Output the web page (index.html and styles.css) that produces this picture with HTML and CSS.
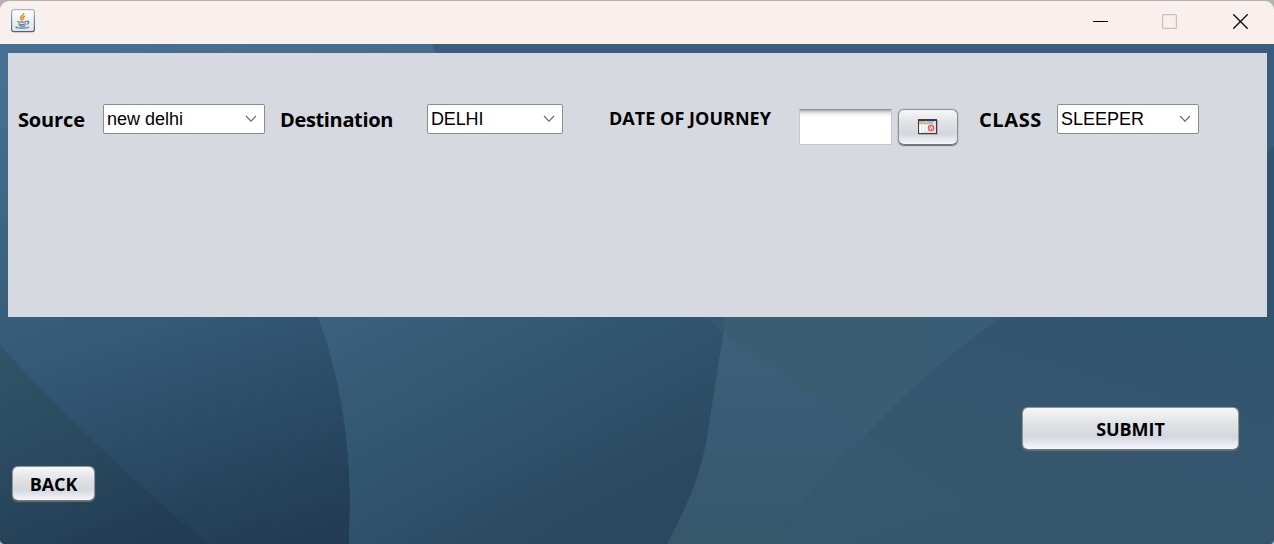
FILE: index.html
```
<!DOCTYPE html>
<html lang="en">
<head>
<meta charset="utf-8">
<title>Journey search</title>
<link rel="stylesheet" href="styles.css">
</head>
<body>
<div class="window">
  <header class="titlebar">
    <svg class="app-icon" width="24" height="24" viewBox="0 0 24 24">
      <defs><linearGradient id="tile" x1="0" y1="0" x2="0" y2="1"><stop offset="0" stop-color="#fff"/><stop offset="1" stop-color="#dfe3e6"/></linearGradient>
      <linearGradient id="edge" x1="0" y1="0" x2="0" y2="1"><stop offset="0" stop-color="#a5b7c4"/><stop offset="1" stop-color="#48657c"/></linearGradient></defs>
      <rect x=".6" y=".6" width="22.8" height="22" rx="2" fill="url(#tile)" stroke="url(#edge)" stroke-width="1.2"/>
      <path d="M12.6 4.3c.6 2-2.900 2.600-2.900 4.800 0 1 .9 1.500 1.600 2.700M14.200 7.300c-2.400.9-2.800 1.800-1.500 3.300" fill="none" stroke="#ee8a34" stroke-width="1.700"/>
      <path d="M6.200 12.500c2 .8 7.500.8 9.800 0M7 14.800c2.500.8 6 .8 8 0M16 12.300c2.600-.6 2.300 2.300-.3 3M8 16.700c2 .5 5 .5 6.400 0M5.600 17.600c-2 .9 2.400 1.700 6 1.500 2.500 0 5.600-.3 6.200-1.300" fill="none" stroke="#557792" stroke-width="1.200"/>
    </svg>
    <div class="controls">
      <svg width="15" height="15" viewBox="0 0 15 15"><path d="M0 7.500h15" stroke="#000"/></svg>
      <svg width="15" height="15" viewBox="0 0 15 15"><rect x=".6" y=".6" width="13.800" height="13.800" rx="1" fill="none" stroke="#c5bebc" stroke-width="1.200"/></svg>
      <svg width="15" height="15" viewBox="0 0 15 15"><path d="M.3.3l14.400 14.400M14.700.3L.3 14.700" stroke="#111" stroke-width="1.400"/></svg>
    </div>
  </header>
  <main class="content">
    <svg class="backdrop" width="1274" height="500" viewBox="0 44 1274 500">
      <defs>
        <linearGradient id="left" gradientUnits="userSpaceOnUse" x1="80" y1="60" x2="235" y2="555"><stop offset="0" stop-color="#467091"/><stop offset=".55" stop-color="#345875"/><stop offset="1" stop-color="#223c53"/></linearGradient>
        <linearGradient id="corner" gradientUnits="userSpaceOnUse" x1="0" y1="345" x2="90" y2="560"><stop offset="0" stop-color="#325468"/><stop offset=".55" stop-color="#2a495e"/><stop offset="1" stop-color="#223c53"/></linearGradient>
        <linearGradient id="middle" gradientUnits="userSpaceOnUse" x1="390" y1="290" x2="530" y2="560"><stop offset="0" stop-color="#3b607b"/><stop offset=".5" stop-color="#32556f"/><stop offset="1" stop-color="#2b485f"/></linearGradient>
        <linearGradient id="right" gradientUnits="userSpaceOnUse" x1="800" y1="320" x2="800" y2="544"><stop offset="0" stop-color="#3d6079"/><stop offset=".4" stop-color="#3b5c76"/><stop offset="1" stop-color="#37576b"/></linearGradient>
        <linearGradient id="far" gradientUnits="userSpaceOnUse" x1="1130" y1="300" x2="1060" y2="544"><stop offset="0" stop-color="#31546f"/><stop offset=".5" stop-color="#35566e"/><stop offset="1" stop-color="#36566b"/></linearGradient>
        <linearGradient id="band" gradientUnits="userSpaceOnUse" x1="720" y1="317" x2="980" y2="317"><stop offset="0" stop-color="#3a5d73"/><stop offset=".55" stop-color="#3a5d71"/><stop offset="1" stop-color="#395d77"/></linearGradient>
      </defs>
      <rect y="44" width="1274" height="500" fill="#3a5d7d"/>
      <path d="M0 44H432C450 90 320 300 318 317C336 362 348 420 350 490Q350 520 349 544H0Z" fill="url(#left)"/>
      <path d="M170 44H432L438 54H178Z" fill="#4b7091" opacity=".5"/>
      <path d="M0 345Q95 450 208 544H0Z" fill="url(#corner)"/>
      <path d="M318 317H726L708 432C703 468 688 507 667 544H349Q356 420 318 317Z" fill="url(#middle)"/>
      <path d="M703 317H727L725 334Z" fill="#365772"/>
      <path d="M726 317H1274V544H667C688 507 703 468 708 432Z" fill="url(#right)"/>
      <path d="M726 317H1002Q925 370 866 435L725 334Z" fill="url(#band)"/>
      <path d="M1002 317Q925 370 866 435L972 506L850 544H1274V317Z" fill="url(#far)"/>
      <path d="M866 435L842 457Q795 505 775 544H850L972 506Z" fill="#37576e" opacity=".75"/>
      <path d="M1274 146L1262 158V317H1274Z" fill="#31536e"/>
    </svg>
    <section class="panel">
      <label class="label source">Source</label>
      <div class="combo combo-source"><span>new delhi</span><svg width="12" height="8" viewBox="0 0 12 8"><path d="M1 1l5 5.200L11 1" fill="none" stroke="#666" stroke-width="1.100"/></svg></div>
      <label class="label destination">Destination</label>
      <div class="combo combo-destination"><span>DELHI</span><svg width="12" height="8" viewBox="0 0 12 8"><path d="M1 1l5 5.200L11 1" fill="none" stroke="#666" stroke-width="1.100"/></svg></div>
      <label class="label date">DATE OF JOURNEY</label>
      <div class="date-field"></div>
      <button class="btn calendar"><svg width="20" height="16" viewBox="0 0 20 16">
        <rect x="1" y="1" width="19" height="15" fill="#aeb0b3"/><rect width="19" height="15" fill="#3d3d3d"/><rect x="1" y="2" width="17" height="12" fill="#dedede"/>
        <rect x="1" y="2" width="6" height="1" fill="#f0ad35"/><rect x="9" y="2" width="7" height="1" fill="#86bce9"/><rect x="1" y="3" width="14" height="2" fill="#bbb"/>
        <path d="M2.500 6v8M5.500 6v7M8.500 6v6" stroke="#fff" stroke-width="2"/><circle cx="13" cy="9" r="2.500" fill="#fff" stroke="#ef5858" stroke-width="1.500"/><path d="M12 8l2 2" stroke="#ef7777"/>
      </svg></button>
      <label class="label class">CLASS</label>
      <div class="combo combo-class"><span>SLEEPER</span><svg width="12" height="8" viewBox="0 0 12 8"><path d="M1 1l5 5.200L11 1" fill="none" stroke="#666" stroke-width="1.100"/></svg></div>
    </section>
    <div class="actions">
      <button class="btn back"><span>BACK</span></button>
      <button class="btn submit"><span>SUBMIT</span></button>
    </div>
  </main>
</div>
</body>
</html>
```
FILE: styles.css
```
* { box-sizing: border-box; }
body { margin: 0; background: #b4b2b3; overflow: hidden; }
.window { width: 1274px; height: 544px; padding-top: 1px; }
.titlebar { height: 43px; background: #f9f0ed; border-radius: 9px 9px 0 0; display: flex; justify-content: space-between; align-items: flex-start; padding: 8px 26px 0 11px; }
.app-icon { display: block; }
.controls { display: flex; gap: 55px; padding-top: 5px; }
.controls svg:first-child { margin-right: -1px; }
.controls svg:last-child { margin-left: 1px; }
.content { position: relative; height: 500px; padding: 9px 7px 0 8px; border-radius: 0 0 5px 5px; overflow: hidden; }
.backdrop { position: absolute; left: 0; top: 0; }
.panel { position: relative; height: 264px; background: #d6d9e0; display: flex; align-items: flex-start; padding: 51px 0 0 10px; }
.label { font: bold 20px/32px "Open Sans", "Noto Sans", sans-serif; color: #000; white-space: nowrap; }
.source { width: 85px; letter-spacing: -.15px; }
.destination { width: 147px; margin-left: 15px; letter-spacing: -.35px; }
.date { width: 190px; margin-left: 46px; font-size: 18px; line-height: 29px; letter-spacing: .03px; }
.class { width: 78px; margin-left: 21px; letter-spacing: .6px; }
.combo { height: 30px; background: #fff; border: 1px solid #8c8c8c; border-radius: 2px; display: flex; justify-content: space-between; align-items: center; padding: 0 7px 0 3px; font: 18px/28px "Liberation Sans", Arial, sans-serif; color: #000; }
.combo-source { width: 162px; }
.combo-destination { width: 136px; }
.combo-destination span { letter-spacing: -.15px; }
.combo-class { width: 142px; }
.date-field { width: 93px; height: 36px; margin-top: 5px; background: linear-gradient(#a8a9ac, #e7e7e9 3px, #fff 7px); border: 1px solid #c5c7cc; border-top-color: #929397; }
.btn { padding: 0; margin: 0; border: 1px solid #909195; border-bottom-color: #74777c; border-radius: 6px; background: linear-gradient(#f6f7f8, #e0e2e5 38%, #d4d7df 70%, #f5f7fc); box-shadow: 0 0 1px #707378, 0 1px 1px #6a6d72; color: #000; display: flex; align-items: center; justify-content: center; font: bold 18px/24px "Open Sans", "Noto Sans", sans-serif; }
.calendar { width: 60px; height: 36px; margin: 5px 0 0 6px; }
.calendar svg { margin-right: 1px; }
.actions { position: relative; display: flex; justify-content: space-between; align-items: flex-start; padding: 90px 28px 0 4px; }
.back { width: 83px; height: 35px; margin-top: 59px; letter-spacing: -.05px; }
.submit { width: 217px; height: 43px; letter-spacing: -.05px; }
```
